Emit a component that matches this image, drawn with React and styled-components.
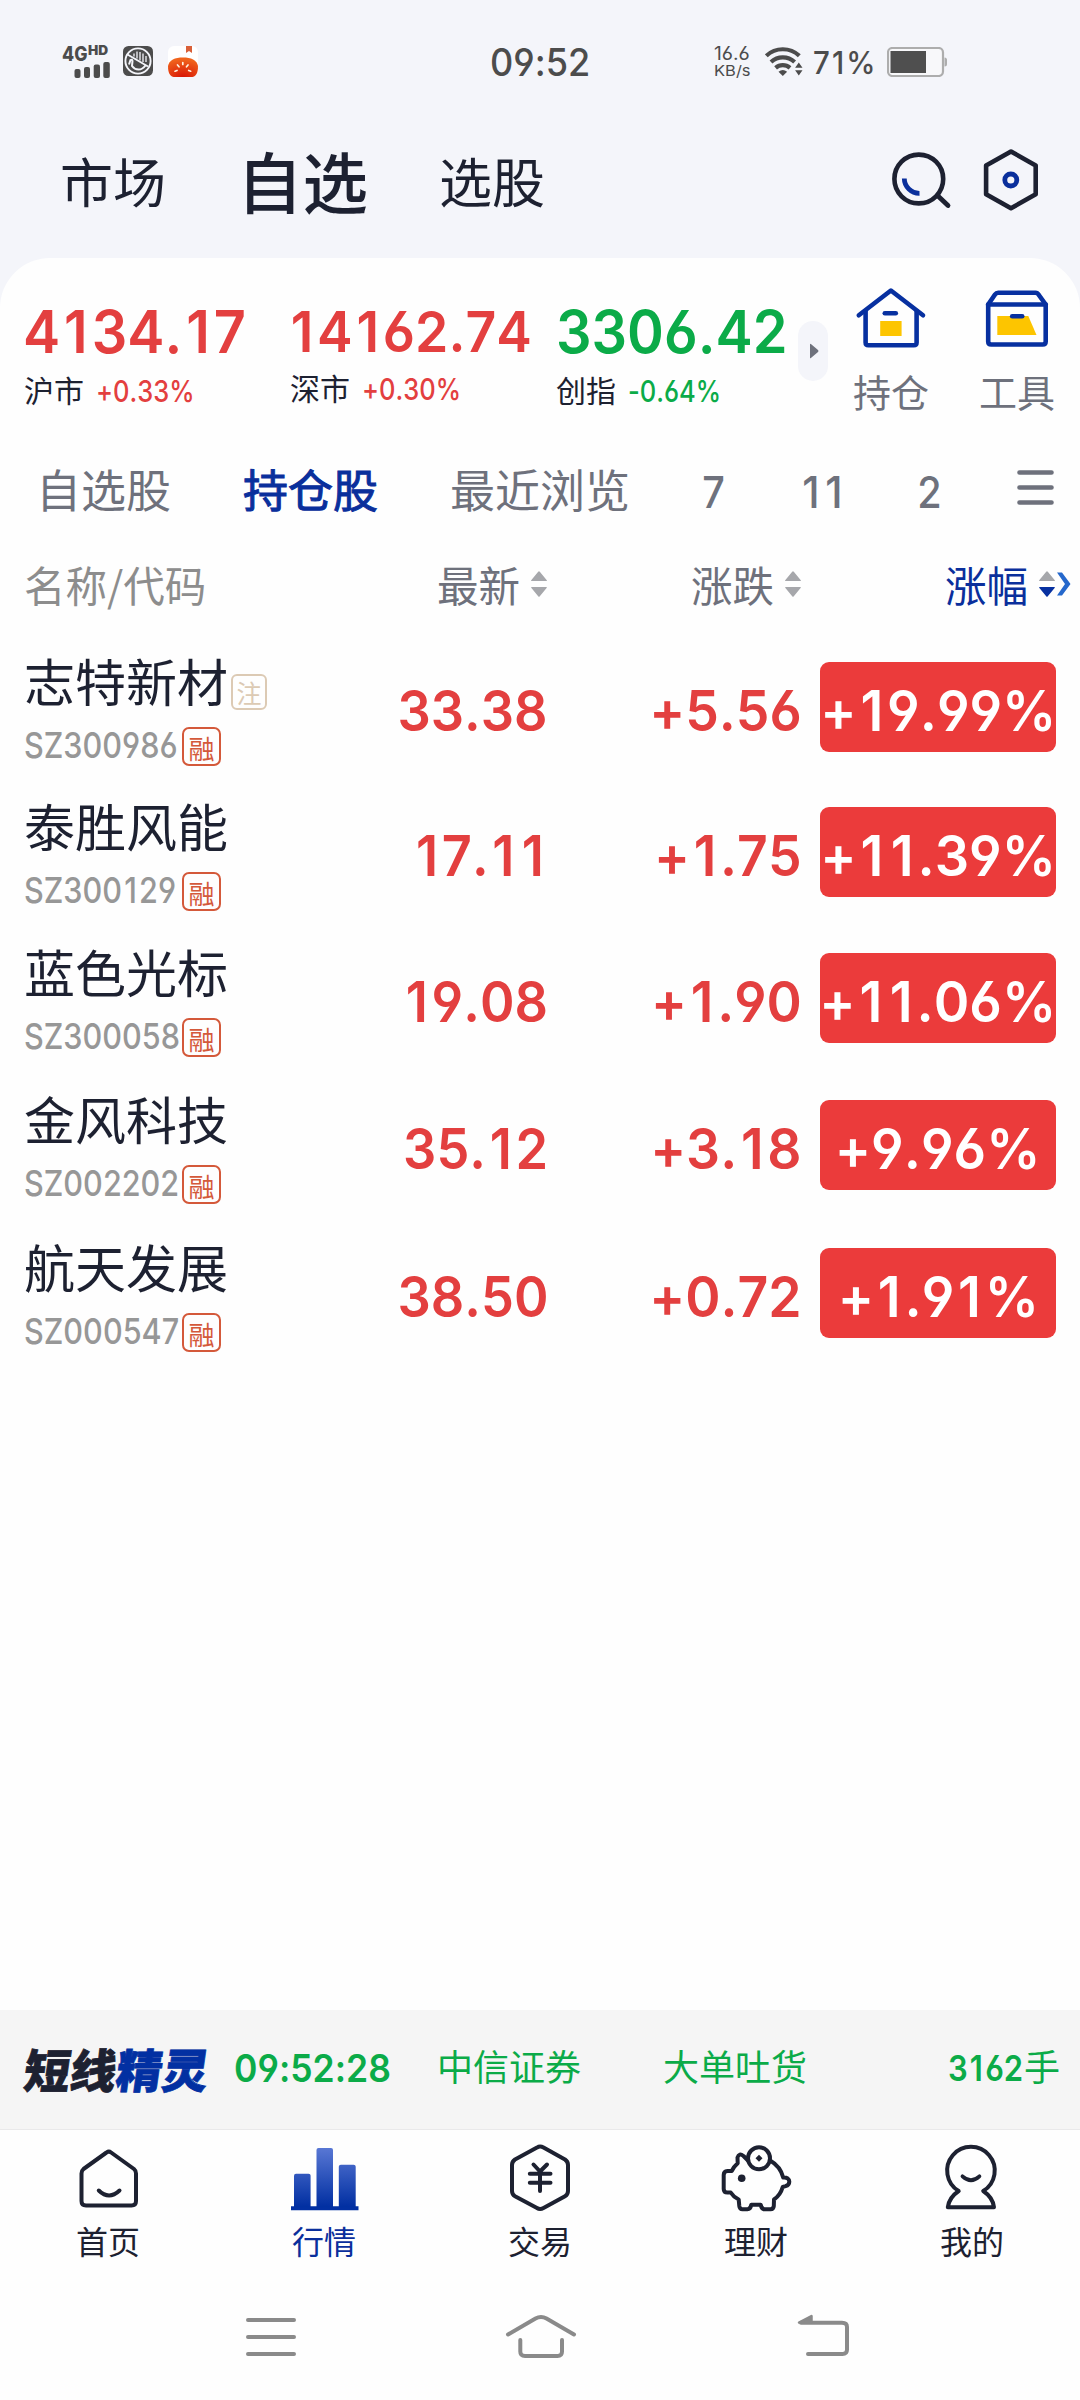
import React from "react";
import styled, { createGlobalStyle } from "styled-components";

const color = {
  ink: "#1d2131",
  gray: "#6e717c",
  mute: "#8d8d8d",
  blue: "#0a2f9c",
  red: "#e33f3f",
  green: "#0bab48",
  page: "#f4f5fa",
};
const cjk = `"Noto Sans CJK SC", sans-serif`;

const Global = createGlobalStyle`
  * { box-sizing: border-box; }
  body { margin: 0; background: #fefefe; font-family: ${cjk}; color: ${color.ink}; }
  svg { display: block; flex: none; }
`;

const Screen = styled.div`
  width: 1080px;
  height: 2400px;
  display: flex;
  flex-direction: column;
  background: ${color.page};
  overflow: hidden;
`;

/* ---------- figures ---------- */
const Figure = styled.span`
  display: inline-block;
  white-space: nowrap;
  font-family: Inter, "Noto Sans", sans-serif;
  font-size: ${(p) => p.$size}px;
  font-weight: ${(p) => p.$weight || 580};
  font-kerning: none;
  font-feature-settings: "cv03", "cv04", "calt" 0;
  transform: scaleX(${(p) => p.$sx || 0.955});
  transform-origin: ${(p) => p.$origin || "left"} center;
`;
const One = styled.span`
  padding: 0 0.07em;
`;
const Num = ({ children, ...rest }) => (
  <Figure {...rest}>
    {children.split(/(1)/).map((part, i) => (part === "1" ? <One key={i}>1</One> : part))}
  </Figure>
);

/* ---------- status bar ---------- */
const StatusBar = styled.div`
  height: 110px;
  padding: 13px 133px 0 62px;
  display: grid;
  grid-template-columns: 428px 100px 1fr;
  align-items: center;
  color: #4c4c4c;
`;
const StatusGroup = styled.div`
  display: flex;
  align-items: center;
  justify-content: ${(p) => (p.$end ? "flex-end" : "flex-start")};
`;
const Signal = styled.div`
  width: 49px;
  height: 32px;
  margin-right: 12px;
  display: flex;
  flex-direction: column;
  justify-content: space-between;
`;
const SignalText = styled.div`
  display: flex;
  height: 15px;
  color: #4c4c4c;
`;
const Gen = styled.span`
  width: 26px;
  display: flex;
  line-height: 15px;
`;
const HdWrap = styled.span`
  height: 9px;
  display: flex;
  line-height: 9px;
`;
const AppIcons = styled.div`
  display: flex;
  gap: 15px;
`;
const Clock = styled.div`
  width: 100px;
  margin-top: 1px;
  display: flex;
  line-height: 40px;
`;
const Speed = styled.div`
  width: 37px;
  margin: 1px 14px 0 0;
  display: flex;
  flex-direction: column;
`;
const SpeedLine = styled.div`
  height: 17.5px;
  display: flex;
  line-height: 17.5px;
`;
const Percent = styled.div`
  width: 62px;
  margin: 3px 12px 0 10px;
  display: flex;
  line-height: 30px;
`;

/* ---------- header ---------- */
const Header = styled.header`
  height: 148px;
  padding: 0 29px 9px 60px;
  display: flex;
  align-items: center;
  justify-content: space-between;
`;
const HeaderTabs = styled.nav`
  display: flex;
  align-items: center;
  gap: 71px;
`;
const HeaderTab = styled.span`
  font-size: ${(p) => (p.$active ? 65.5 : 53)}px;
  line-height: 80px;
  font-weight: ${(p) => (p.$active ? 500 : 400)};
`;
const HeaderTools = styled.div`
  display: flex;
  gap: 9px;
`;

/* ---------- card ---------- */
const Card = styled.main`
  flex: 1;
  background: #fefefe;
  border-radius: 50px 50px 0 0;
  display: flex;
  flex-direction: column;
`;
const Strip = styled.section`
  height: 172px;
  padding: 26px 0 0 24px;
  display: grid;
  grid-template-columns: 266px 266px 242px 30px 126px 126px;
  align-items: start;
`;
const Index = styled.div`
  padding-top: 18px;
  color: ${(p) => (p.$down ? color.green : color.red)};
`;
const IndexValue = styled.div`
  height: 60px;
  margin-left: ${(p) => p.$shift || 0}px;
  display: flex;
  line-height: 60px;
`;
const IndexMeta = styled.div`
  display: flex;
  height: 40px;
  margin-top: ${(p) => (p.$raise ? 7 : 9)}px;
  line-height: 41px;
`;
const IndexName = styled.span`
  width: 72px;
  font-size: 30px;
  line-height: 37px;
  color: ${color.ink};
`;
const Pill = styled.button`
  width: 30px;
  height: 60px;
  margin-top: 37px;
  padding: 0 0 0 12px;
  border: 0;
  border-radius: 15px;
  background: #f4f5fa;
  display: flex;
  align-items: center;
`;
const Quick = styled.div`
  display: flex;
  flex-direction: column;
  align-items: center;
  gap: 18px;
  font-size: 38px;
  line-height: 46px;
  color: ${color.gray};
`;

const GroupTabs = styled.nav`
  height: 116px;
  padding: 1px 26px 0 36px;
  display: flex;
  align-items: center;
  gap: 72px;
`;
const GroupTab = styled.span`
  font-size: 45px;
  line-height: 60px;
  color: ${(p) => (p.$active ? color.blue : color.gray)};
  -webkit-text-stroke: ${(p) => (p.$active ? "1px" : "0")} ${color.blue};
`;
const GroupNumber = styled.span`
  width: ${(p) => p.$digits * 24}px;
  margin-top: 6px;
  line-height: 60px;
  display: flex;
  justify-content: center;
  color: ${color.gray};
`;
const MenuButton = styled.div`
  margin: -2px 0 0 auto;
`;

const columns = "286px 237px 254px 255px";
const TableHead = styled.div`
  height: 88px;
  padding: 0 24px 12px;
  display: grid;
  grid-template-columns: ${columns};
  align-items: center;
  font-size: 41.5px;
  line-height: 56px;
`;
const HeadCell = styled.div`
  display: flex;
  align-items: center;
  justify-content: ${(p) => (p.$left ? "flex-start" : "flex-end")};
  gap: 11px;
  margin-right: ${(p) => (p.$active ? -15 : 0)}px;
  color: ${(p) => (p.$active ? color.blue : p.$left ? color.mute : color.gray)};
`;
const SortGroup = styled.span`
  display: flex;
  align-items: center;
  gap: 1px;
`;

const Row = styled.div`
  height: ${(p) => p.$height}px;
  padding: 16px 24px 0;
  display: grid;
  grid-template-columns: ${columns};
`;
const NameCell = styled.div`
  display: flex;
  flex-direction: column;
`;
const NameLine = styled.div`
  height: 60px;
  display: flex;
  font-size: 51px;
  line-height: 60px;
  white-space: nowrap;
`;
const NoteTag = styled.span`
  width: 36px;
  height: 36px;
  margin: 24px 0 0 3px;
  border: 2px solid #dccab4;
  border-radius: 6px;
  color: #dccab4;
  font-size: 25px;
  line-height: 33px;
  text-align: center;
`;
const CodeLine = styled.div`
  height: 40px;
  margin-top: 17px;
  display: flex;
  line-height: 37px;
  color: #979797;
`;
const CodeBox = styled.span`
  width: 158px;
  display: flex;
`;
const MarginTag = styled.span`
  width: 39px;
  height: 39px;
  border: 2px solid #d4593a;
  border-radius: 7px;
  color: #d4593a;
  font-size: 26px;
  line-height: 37px;
  text-align: center;
`;
const Value = styled.div`
  height: 90px;
  margin: 12px -1px 0 0;
  display: flex;
  justify-content: flex-end;
  line-height: 98px;
  color: ${color.red};
`;
const Change = styled.div`
  width: 236px;
  height: 90px;
  margin: 12px 0 0 19px;
  border-radius: 9px;
  background: #eb3b3b;
  color: #fff;
  display: flex;
  justify-content: center;
  line-height: 98px;
`;

/* ---------- ticker ---------- */
const Ticker = styled.section`
  height: 120px;
  padding: 0 20px 4px 25px;
  display: grid;
  grid-template-columns: 209px 203px 226px 1fr auto;
  align-items: center;
  background: #f5f5f5;
  border-bottom: 1px solid #e9e9ea;
  color: ${color.green};
`;
const Logo = styled.div`
  font-size: 46px;
  line-height: 60px;
  font-weight: 900;
  white-space: nowrap;
  transform: skewX(-8deg);
  color: ${color.ink};
  -webkit-text-stroke: 0.8px currentColor;
`;
const LogoAccent = styled.span`
  color: #0230a2;
`;
const TickerText = styled.span`
  font-size: 36px;
  line-height: 50px;
  padding-bottom: 6px;
`;
const TickerTime = styled.span`
  display: flex;
  line-height: 50px;
  padding-top: 1px;
`;
const Lots = styled.span`
  display: flex;
  align-items: center;
`;
const LotsBox = styled.span`
  width: 76px;
  padding-top: 1px;
  display: flex;
  line-height: 50px;
`;

/* ---------- bottom bars ---------- */
const BottomNav = styled.nav`
  height: 140px;
  display: grid;
  grid-template-columns: repeat(5, 1fr);
  background: #fefefe;
`;
const NavItem = styled.div`
  padding-top: 10px;
  display: flex;
  flex-direction: column;
  align-items: center;
  gap: 6px;
  font-size: 32px;
  line-height: 41px;
  color: ${(p) => (p.$active ? color.blue : color.ink)};
`;
const SystemNav = styled.nav`
  height: 130px;
  padding: 37px 0 0 231px;
  display: grid;
  grid-template-columns: 270px 282px 80px;
  align-items: start;
  background: #fefefe;
`;

/* ---------- icons ---------- */
const line = { fill: "none", stroke: color.ink, strokeWidth: 4, strokeLinecap: "round", strokeLinejoin: "round" };
const heavy = { ...line, strokeWidth: 4.6 };

const SignalBars = () => (
  <svg width="49" height="16" viewBox="0 0 49 16" fill="#4c4c4c">
    <rect x="12.500" y="7" width="6" height="9" rx="2" />
    <rect x="22" y="5" width="6" height="11" rx="2" />
    <rect x="31.700" y="2.5" width="6.300" height="13.5" rx="2" />
    <rect x="41.300" y="0" width="6.500" height="16" rx="2" />
  </svg>
);
const HandIcon = () => (
  <svg width="30" height="30" viewBox="0 0 30 30">
    <rect width="30" height="30" rx="5.5" fill="#4c4c4c" />
    <circle cx="15" cy="15" r="12.600" fill="none" stroke="#f4f5fa" strokeWidth="1.900" />
    <path d="M11 7.500v3M14 5.500v7M17 6v8.500M20 7.500v8.500M23 10v6" stroke="#f4f5fa" strokeWidth="1.300" fill="none" />
    <path d="M6 18.500l1.500-4.500q1.500-1 2 1l-.500 5q2.500 3.500 6.500 3.500t7-4" stroke="#f4f5fa" strokeWidth="2" fill="none" />
    <path d="M4.500 8.500 25 20.500" stroke="#f4f5fa" strokeWidth="1.900" />
  </svg>
);
const PumpkinIcon = () => (
  <svg width="30" height="31" viewBox="0 0 30 31">
    <defs>
      <radialGradient id="pumpkin" cx="0.5" cy="1" r="0.9">
        <stop offset="0" stopColor="#d81505" />
        <stop offset="1" stopColor="#f0631c" />
      </radialGradient>
    </defs>
    <rect width="30" height="31" rx="6" fill="#fff" />
    <path d="M18 0h6v7l-3-2-3 2z" fill="#d95f38" />
    <path d="M0 20C1 14 7 11.500 15 11.500S29 14 30 20c0 4-.500 6-1.500 8-1.500 2.500-3 3-6 3h-15c-3 0-4.500-.500-6-3C.500 26 0 24 0 20z" fill="url(#pumpkin)" />
    <path d="M14.800 16.500v2M9.500 19l1.500 1.800M20 19l-1.500 1.800M7 25.200l2-.700M22.700 25.200l-2-.700" stroke="#fff3df" strokeWidth="1.700" strokeLinecap="round" />
  </svg>
);
const WifiIcon = () => (
  <svg width="38" height="29" viewBox="0 0 38 29">
    <g fill="none" stroke="#4c4c4c" strokeWidth="4.200">
      <path d="M1.300 8.800a24 24 0 0 1 33 0" />
      <path d="M6 15a17.500 17.500 0 0 1 23.600 0" />
      <path d="M10.600 20.800a11 11 0 0 1 14.400 0" />
    </g>
    <path d="M17.800 29l-4.300-4.300q4.300-3.400 8.600 0z" fill="#4c4c4c" />
    <path d="M33.800 15.500l3.700 5.300h-7.400zM33.800 28.500l3.700-5.300h-7.400z" fill="#4c4c4c" />
  </svg>
);
const BatteryIcon = () => (
  <svg width="60" height="30" viewBox="0 0 60 30">
    <rect x="1" y="1" width="55" height="28" rx="4.500" fill="#f8f8fa" stroke="#adadad" strokeWidth="2.200" />
    <rect x="3.500" y="4" width="35.500" height="22" fill="#4f4f4f" />
    <path d="M57.500 10.500q2.500 0 2.500 2.500v4q0 2.500-2.500 2.500z" fill="#adadad" />
  </svg>
);
const SearchIcon = () => (
  <svg width="80" height="80" viewBox="0 0 80 80">
    <circle cx="36.800" cy="39" r="24.400" {...heavy} />
    <path d="M56 56l10 9.500" {...heavy} strokeWidth="4.800" />
    <path d="M22.300 38.500A15 15 0 0 0 37.500 53.300" fill="none" stroke="#0a2f9c" strokeWidth="4.800" />
  </svg>
);
const HexIcon = () => (
  <svg width="80" height="80" viewBox="0 0 80 80">
    <path d="M40 11.500 64.700 25.500V54.300L40 68.300 15.100 54.300V25.500z" {...heavy} />
    <circle cx="39.800" cy="40" r="6" fill="none" stroke="#0a2f9c" strokeWidth="4.800" />
  </svg>
);
const HouseBoxIcon = () => (
  <svg width="80" height="66" viewBox="0 0 80 66">
    <path d="M29.200 37h21.400v15H29.200z" fill="#fdc500" />
    <g {...heavy} stroke="#0730a0">
      <path d="M7.800 31.300 39.900 6.500 72 31.300" />
      <path d="M14.600 27V58.500q0 2.800 2.800 2.800H62.800q2.800 0 2.800-2.800V27" />
      <path d="M33.800 29.300h11" />
    </g>
  </svg>
);
const ToolBoxIcon = () => (
  <svg width="80" height="66" viewBox="0 0 80 66">
    <path d="M20.300 32h31l8.200 19H20.300z" fill="#fdc500" />
    <g {...heavy} stroke="#0730a0">
      <path d="M11.200 20.500 18 10.500q1.200-1.800 3.200-1.800H58.500q2 0 3 1.800L68.700 20.500" />
      <path d="M11.200 20.500H68.700V57.500q0 3-3 3H14.200q-3 0-3-3z" />
      <path d="M35.200 32.300h10" />
    </g>
  </svg>
);
const PlayIcon = () => (
  <svg width="9" height="16" viewBox="0 0 9 16">
    <path d="M0 1.500Q0 0 1.200 1.200L8 7q1 1 0 2L1.200 14.800Q0 16 0 14.500z" fill="#6e717c" />
  </svg>
);
const MenuIcon = () => (
  <svg width="37" height="36" viewBox="0 0 37 36" stroke="#6e717c" strokeWidth="4.600" strokeLinecap="round">
    <path d="M2.500 2.500h32M2.500 17.500h32M2.500 32.500h32" />
  </svg>
);
const SortIcon = ({ down }) => (
  <svg width="16" height="26" viewBox="0 0 16 26">
    <path d="M7.200.8q.8-1 1.600 0L15.600 9q.8 1-.4 1H.8Q-.4 10 .4 9z" fill="#a6a7ab" />
    <path d="M7.200 25.200q.8 1 1.600 0L15.600 17q.8-1-.4-1H.8Q-.4 16 .4 17z" fill={down ? "#0730a0" : "#a6a7ab"} />
  </svg>
);
const ChevronIcon = () => (
  <svg width="15" height="24" viewBox="0 0 15 24">
    <path d="M1 .5h5L14.500 12 6 23.500H1L9 12z" fill="#2568cc" />
  </svg>
);

const HomeIcon = () => (
  <svg width="80" height="74" viewBox="0 0 80 74" {...line}>
    <path d="M38.500 12.500q2.300-1.700 4.600 0L66 29q2 1.600 2 4.500V61q0 4.500-4.500 4.500H18Q13.500 65.500 13.500 61V33.500Q13.500 30.600 15.500 29z" />
    <path d="M30.800 50.500Q41 60.500 51.500 50.500" />
  </svg>
);
const BarsIcon = () => (
  <svg width="80" height="74" viewBox="0 0 80 74">
    <defs>
      <linearGradient id="bars" gradientUnits="userSpaceOnUse" x1="0" y1="8" x2="0" y2="66">
        <stop offset="0" stopColor="#5877d4" />
        <stop offset="1" stopColor="#0230a2" />
      </linearGradient>
    </defs>
    <g fill="url(#bars)">
      <path d="M10 67V35.700q0-2 2-2H24.600q2 0 2 2V67z" />
      <path d="M32.500 67V10q0-2 2-2H47q2 0 2 2V67z" />
      <path d="M54.800 67V26.700q0-2 2-2H69.700q2 0 2 2V67z" />
    </g>
    <path d="M7 66.300h67.500v4H7z" fill="#0230a2" />
  </svg>
);
const YenIcon = () => (
  <svg width="80" height="74" viewBox="0 0 80 74" {...line}>
    <path d="M37 7.600Q40 5.600 43.500 7.600L65 19.500Q68 21.500 68 25V51Q68 54.500 65 56.200L43.500 68Q40 70 37 68L15 56.200Q12 54.500 12 51V25Q12 21.500 15 19.500z" />
    <path d="M33.500 24.500 40 31.500 47 24.500M40 31.500V51M29.800 33.700H50.500M29.800 42.700H50.500" />
  </svg>
);
const PigIcon = () => (
  <svg width="80" height="74" viewBox="0 0 80 74" {...line}>
    <circle cx="43" cy="18.300" r="11" />
    <path d="M32 20.500 27.500 16Q23 12.500 21.500 17.500L21.700 23.300Q18 26.500 15.700 31H11.500Q7.700 31.200 7.700 35V49Q7.700 52.500 11.500 52.500H14.700Q17.500 57 22.700 59.500L23.300 66Q23.700 69.300 26.500 69.300H31.500Q34.500 69.300 35.300 64.700H44.700Q45.500 69.300 48.500 69.300H54.500Q57.500 69.300 57.800 66L58 59.500Q64.500 55 66.700 47 L69.500 46.200Q73.300 45 73.300 41.700 73 37 67.200 37.500 64.500 26.500 54.500 20.700" />
    <circle cx="25.700" cy="38.300" r="3.800" fill={color.ink} stroke="none" />
    <path d="M43 14.800l3.500 3.500-3.500 3.500-3.500-3.500z" fill={color.ink} stroke="none" />
  </svg>
);
const PersonIcon = () => (
  <svg width="80" height="74" viewBox="0 0 80 74" {...line}>
    <path d="M26.700 51A23.800 23.800 0 1 1 51.200 51Q61 57.500 62 67.300H15.800Q17 57.500 26.700 51z" />
    <path d="M30.500 36.300Q39 44 47.400 36.300" strokeWidth="3.800" />
  </svg>
);

const sys = { fill: "none", stroke: "#8a8a8a", strokeWidth: 4, strokeLinecap: "round", strokeLinejoin: "round" };
const SysMenu = () => (
  <svg width="80" height="60" viewBox="0 0 80 60" {...sys}>
    <path d="M17 13h46M17 30h46M17 47h46" />
  </svg>
);
const SysHome = () => (
  <svg width="80" height="60" viewBox="0 0 80 60" {...sys}>
    <path d="M7 27.500 34.500 11.500Q40 8.500 45.500 11.500L73 27.500" />
    <path d="M19.300 33V44.500Q19.300 49 24 49H56.500Q61 49 61 44.500V33" />
  </svg>
);
const SysBack = () => (
  <svg width="80" height="60" viewBox="0 0 80 60" {...sys}>
    <path d="M18 15.700H59Q64 15.700 64 20V42.500Q64 47 59.500 47H25" />
    <path d="M16 15.500 28.500 9V15.500z" fill="#8a8a8a" strokeWidth="2.500" />
  </svg>
);

/* ---------- data ---------- */
const indices = [
  { name: "沪市", value: "4134.17", pct: "+0.33%", size: 58.5, shift: -1 },
  { name: "深市", value: "14162.74", pct: "+0.30%", size: 56, shift: -3, raise: true },
  { name: "创指", value: "3306.42", pct: "-0.64%", size: 58.5, down: true },
];
const stocks = [
  { name: "志特新材", note: "注", code: "SZ300986", price: "33.38", diff: "+5.56", pct: "+19.99%" },
  { name: "泰胜风能", code: "SZ300129", price: "17.11", diff: "+1.75", pct: "+11.39%" },
  { name: "蓝色光标", code: "SZ300058", price: "19.08", diff: "+1.90", pct: "+11.06%" },
  { name: "金风科技", code: "SZ002202", price: "35.12", diff: "+3.18", pct: "+9.96%" },
  { name: "航天发展", code: "SZ000547", price: "38.50", diff: "+0.72", pct: "+1.91%" },
];
const nav = [
  { label: "首页", Icon: HomeIcon },
  { label: "行情", Icon: BarsIcon, active: true },
  { label: "交易", Icon: YenIcon },
  { label: "理财", Icon: PigIcon },
  { label: "我的", Icon: PersonIcon },
];

export default function App() {
  return (
    <Screen>
      <Global />
      <StatusBar>
        <StatusGroup>
          <Signal>
            <SignalText>
              <Gen><Figure $size={20.5} $weight={800} $sx={0.86}>4G</Figure></Gen>
              <HdWrap><Figure $size={13} $weight={900} $sx={1.05}>HD</Figure></HdWrap>
            </SignalText>
            <SignalBars />
          </Signal>
          <AppIcons>
            <HandIcon />
            <PumpkinIcon />
          </AppIcons>
        </StatusGroup>
        <Clock><Num $size={38} $weight={500} $sx={0.95}>09:52</Num></Clock>
        <StatusGroup $end>
          <Speed>
            <SpeedLine><Figure $size={18} $weight={400} $sx={1.07}>16.6</Figure></SpeedLine>
            <SpeedLine><Figure $size={15} $weight={400} $sx={1.1}>KB/s</Figure></SpeedLine>
          </Speed>
          <WifiIcon />
          <Percent><Num $size={31} $weight={500} $sx={0.95}>71%</Num></Percent>
          <BatteryIcon />
        </StatusGroup>
      </StatusBar>

      <Header>
        <HeaderTabs>
          <HeaderTab>市场</HeaderTab>
          <HeaderTab $active>自选</HeaderTab>
          <HeaderTab>选股</HeaderTab>
        </HeaderTabs>
        <HeaderTools>
          <SearchIcon />
          <HexIcon />
        </HeaderTools>
      </Header>

      <Card>
        <Strip>
          {indices.map((x) => (
            <Index key={x.name} $down={x.down}>
              <IndexValue $shift={x.shift}><Num $size={x.size}>{x.value}</Num></IndexValue>
              <IndexMeta $raise={x.raise}>
                <IndexName>{x.name}</IndexName>
                <Num $size={30} $weight={550} $sx={0.85}>{x.pct}</Num>
              </IndexMeta>
            </Index>
          ))}
          <Pill><PlayIcon /></Pill>
          <Quick><HouseBoxIcon />持仓</Quick>
          <Quick><ToolBoxIcon />工具</Quick>
        </Strip>

        <GroupTabs>
          <GroupTab>自选股</GroupTab>
          <GroupTab $active>持仓股</GroupTab>
          <GroupTab>最近浏览</GroupTab>
          <GroupNumber $digits={1}><Num $size={44} $weight={550} $sx={0.9} $origin="center">7</Num></GroupNumber>
          <GroupNumber $digits={2}><Num $size={44} $weight={550} $sx={0.95} $origin="center">11</Num></GroupNumber>
          <GroupNumber $digits={1}><Num $size={44} $weight={550} $sx={0.9} $origin="center">2</Num></GroupNumber>
          <MenuButton><MenuIcon /></MenuButton>
        </GroupTabs>

        <TableHead>
          <HeadCell $left>名称/代码</HeadCell>
          <HeadCell>最新<SortIcon /></HeadCell>
          <HeadCell>涨跌<SortIcon /></HeadCell>
          <HeadCell $active>
            涨幅
            <SortGroup><SortIcon down /><ChevronIcon /></SortGroup>
          </HeadCell>
        </TableHead>

        {stocks.map((s, i) => (
          <Row key={s.code} $height={145 + i}>
            <NameCell>
              <NameLine>
                {s.name}
                {s.note && <NoteTag>{s.note}</NoteTag>}
              </NameLine>
              <CodeLine>
                <CodeBox><Num $size={36} $weight={450} $sx={0.85}>{s.code}</Num></CodeBox>
                <MarginTag>融</MarginTag>
              </CodeLine>
            </NameCell>
            <Value><Num $size={56} $sx={0.935} $origin="right">{s.price}</Num></Value>
            <Value><Num $size={56} $sx={0.955} $origin="right">{s.diff}</Num></Value>
            <Change><Num $size={56} $sx={0.965} $origin="center">{s.pct}</Num></Change>
          </Row>
        ))}
      </Card>

      <Ticker>
        <Logo>短线<LogoAccent>精灵</LogoAccent></Logo>
        <TickerTime><Num $size={38} $sx={0.935}>09:52:28</Num></TickerTime>
        <TickerText>中信证券</TickerText>
        <TickerText>大单吐货</TickerText>
        <Lots>
          <LotsBox><Num $size={36} $sx={0.86}>3162</Num></LotsBox>
          <TickerText>手</TickerText>
        </Lots>
      </Ticker>

      <BottomNav>
        {nav.map(({ label, Icon, active }) => (
          <NavItem key={label} $active={active}>
            <Icon />
            {label}
          </NavItem>
        ))}
      </BottomNav>
      <SystemNav>
        <SysMenu />
        <SysHome />
        <SysBack />
      </SystemNav>
    </Screen>
  );
}
